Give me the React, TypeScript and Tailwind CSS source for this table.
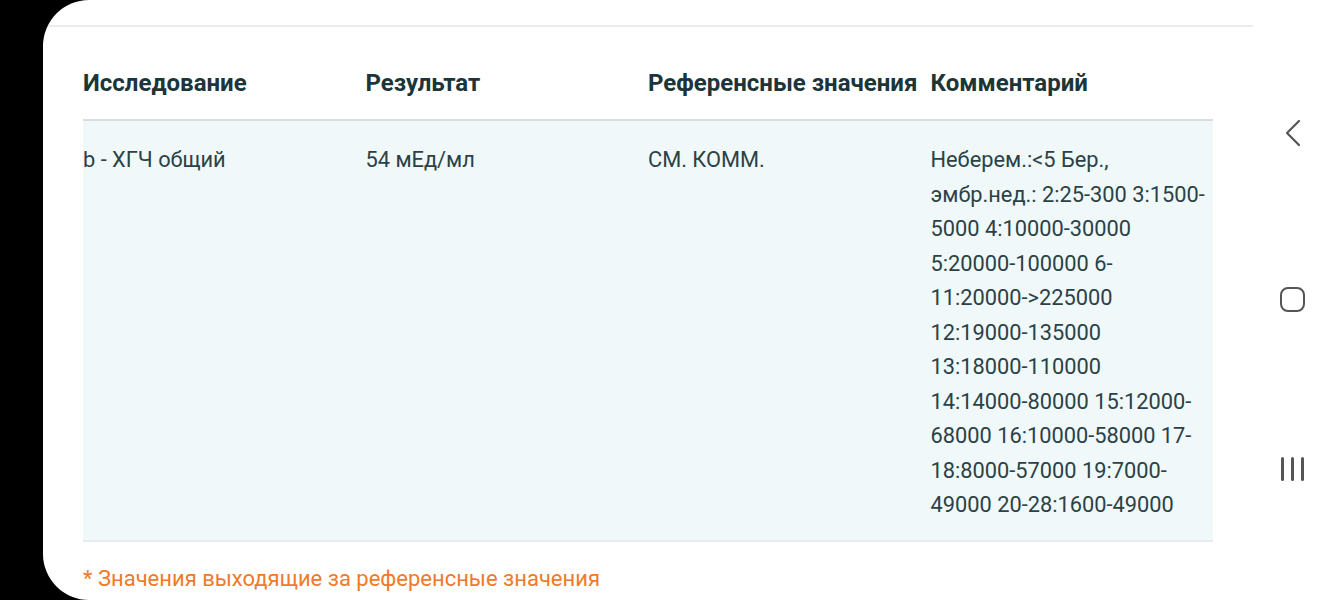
const columns = ['Исследование', 'Результат', 'Референсные значения', 'Комментарий'];

const row = {
  name: 'b - ХГЧ общий',
  result: '54 мЕд/мл',
  reference: 'СМ. КОММ.',
  // wrapped the same way as the device renders it
  comment: [
    'Неберем.:<5 Бер.,',
    'эмбр.нед.: 2:25-300 3:1500-',
    '5000 4:10000-30000',
    '5:20000-100000 6-',
    '11:20000->225000',
    '12:19000-135000',
    '13:18000-110000',
    '14:14000-80000 15:12000-',
    '68000 16:10000-58000 17-',
    '18:8000-57000 19:7000-',
    '49000 20-28:1600-49000',
  ],
};

const font = { fontFamily: "Roboto, 'Noto Sans', sans-serif" };

export default function App() {
  return (
    <div className="h-[600px] w-[1332px] bg-black overflow-hidden" style={font}>
      <div className="ml-[43px] h-full bg-white rounded-l-[46px] flex">
        {/* Page content */}
        <div className="flex-1 flex flex-col">
          <div className="mt-[25px] ml-[5px] h-[2px] bg-[#ececec]" />

          <div className="ml-[40px] w-[1130px]">
            {/* Header */}
            <div className="grid grid-cols-4 pt-[40px] pb-[20px] border-b-2 border-[#d9dddd]">
              {columns.map((col) => (
                <div key={col} className="text-[24px] leading-[32px] font-bold text-[#1b3539] whitespace-nowrap">
                  {col}
                </div>
              ))}
            </div>

            {/* Row */}
            <div className="grid grid-cols-4 bg-[#f0f8fa] pt-[22px] pb-[17px] border-b-2 border-[#e8ecec] text-[21.8px] leading-[34.5px] text-[#2a4246]">
              <div>{row.name}</div>
              <div>{row.result}</div>
              <div>{row.reference}</div>
              <div className="whitespace-nowrap">
                {row.comment.map((line) => (
                  <div key={line}>{line}</div>
                ))}
              </div>
            </div>

            <div className="mt-[23px] text-[22px] leading-[28px] text-[#ef7a2a]">
              * Значения выходящие за референсные значения
            </div>
          </div>
        </div>

        {/* Android navigation */}
        <div className="w-[79px] flex flex-col items-center pt-[119px] text-[#555555]">
          <svg width="20" height="28" viewBox="0 0 20 28" fill="none" stroke="currentColor" strokeWidth="2.2" strokeLinecap="round" strokeLinejoin="round">
            <polyline points="16,2 4,14 16,26" />
          </svg>
          <div className="mt-[140px] w-[25px] h-[25px] rounded-[8px] border-[2.5px] border-[#555555]" />
          <div className="mt-[145px] flex gap-[7px]">
            <div className="w-[3px] h-[24px] bg-[#555555] rounded-full" />
            <div className="w-[3px] h-[24px] bg-[#555555] rounded-full" />
            <div className="w-[3px] h-[24px] bg-[#555555] rounded-full" />
          </div>
        </div>
      </div>
    </div>
  );
}
